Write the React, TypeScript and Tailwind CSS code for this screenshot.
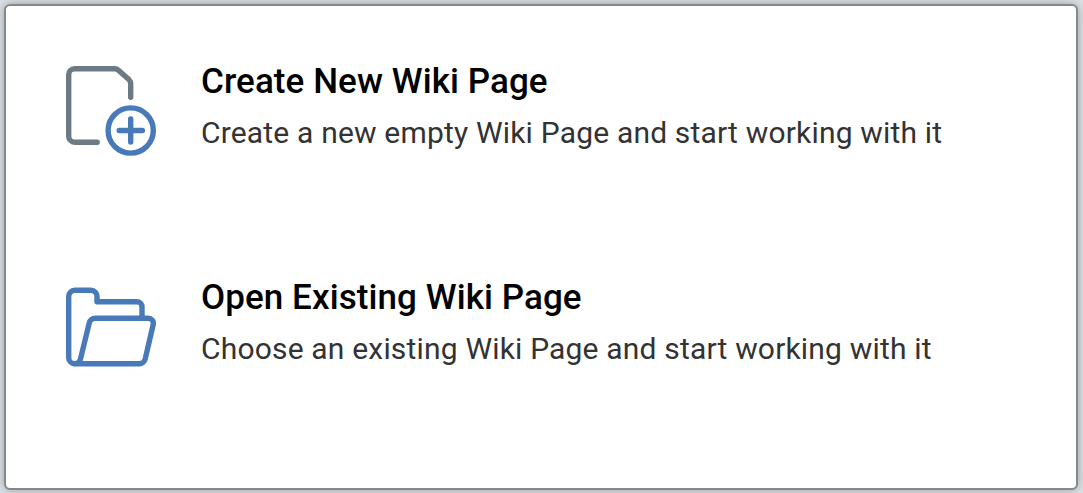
import type { ReactNode } from 'react';

interface ActionRowProps {
  icon: ReactNode;
  title: string;
  description: string;
}

function NewPageIcon() {
  return (
    <svg className="size-[90px] shrink-0" viewBox="0 0 90 90" fill="none" strokeWidth="5.4" strokeLinecap="round" strokeLinejoin="round">
      <path
        stroke="#6e7a83"
        d="M31.2 76.2H8.7a6 6 0 0 1-6-6V8.7a6 6 0 0 1 6-6H48.5a6 6 0 0 1 4.2 1.7L62.9 13.6a6 6 0 0 1 1.8 4.2V31.2"
      />
      <g stroke="#4879b9">
        <circle cx="64.7" cy="64.5" r="22.6" />
        <path d="M53.2 64.5H76.4M64.7 53V76" />
      </g>
    </svg>
  );
}

function OpenFolderIcon() {
  return (
    <svg className="mt-1 size-[90px] shrink-0" viewBox="0 0 90 90" fill="none" stroke="#4879b9" strokeWidth="5.4" strokeLinejoin="round">
      <path d="M76 32.3V20.7a5 5 0 0 0-5-5H31V10.3a6 6 0 0 0-6-6H8.7a6 6 0 0 0-6 6V71.7a6 6 0 0 0 6 6" />
      <path d="M8.7 77.7c3.2 0 5-1.6 5.7-4.3L23.2 37.1a6.2 6.2 0 0 1 6-4.8H82.3a5 5 0 0 1 4.9 6.2L79.2 73a6 6 0 0 1-5.9 4.7Z" />
    </svg>
  );
}

function ActionRow({ icon, title, description }: ActionRowProps) {
  return (
    <div className="flex h-[90px] items-start gap-[45px]">
      {icon}
      <div className="whitespace-nowrap">
        <h2 className="-mt-1 text-[35px] leading-[40px] font-medium tracking-[0.08px] text-black">{title}</h2>
        <p className="mt-[13px] text-[30px] leading-[36px] tracking-[0.18px] text-[#333]">{description}</p>
      </div>
    </div>
  );
}

export default function App() {
  return (
    <div className="h-[493px] w-[1083px] overflow-hidden bg-[#dbe1e5] pt-1 pl-1 font-['Roboto',sans-serif]">
      <div className="flex h-[486px] w-[1074px] flex-col gap-[126px] rounded-md border-2 border-[#888] bg-white pt-[60px] pl-[60px] shadow-[0_0_10px_rgba(0,0,0,0.3)]">
        <ActionRow
          icon={<NewPageIcon />}
          title="Create New Wiki Page"
          description="Create a new empty Wiki Page and start working with it"
        />
        <ActionRow
          icon={<OpenFolderIcon />}
          title="Open Existing Wiki Page"
          description="Choose an existing Wiki Page and start working with it"
        />
      </div>
    </div>
  );
}
